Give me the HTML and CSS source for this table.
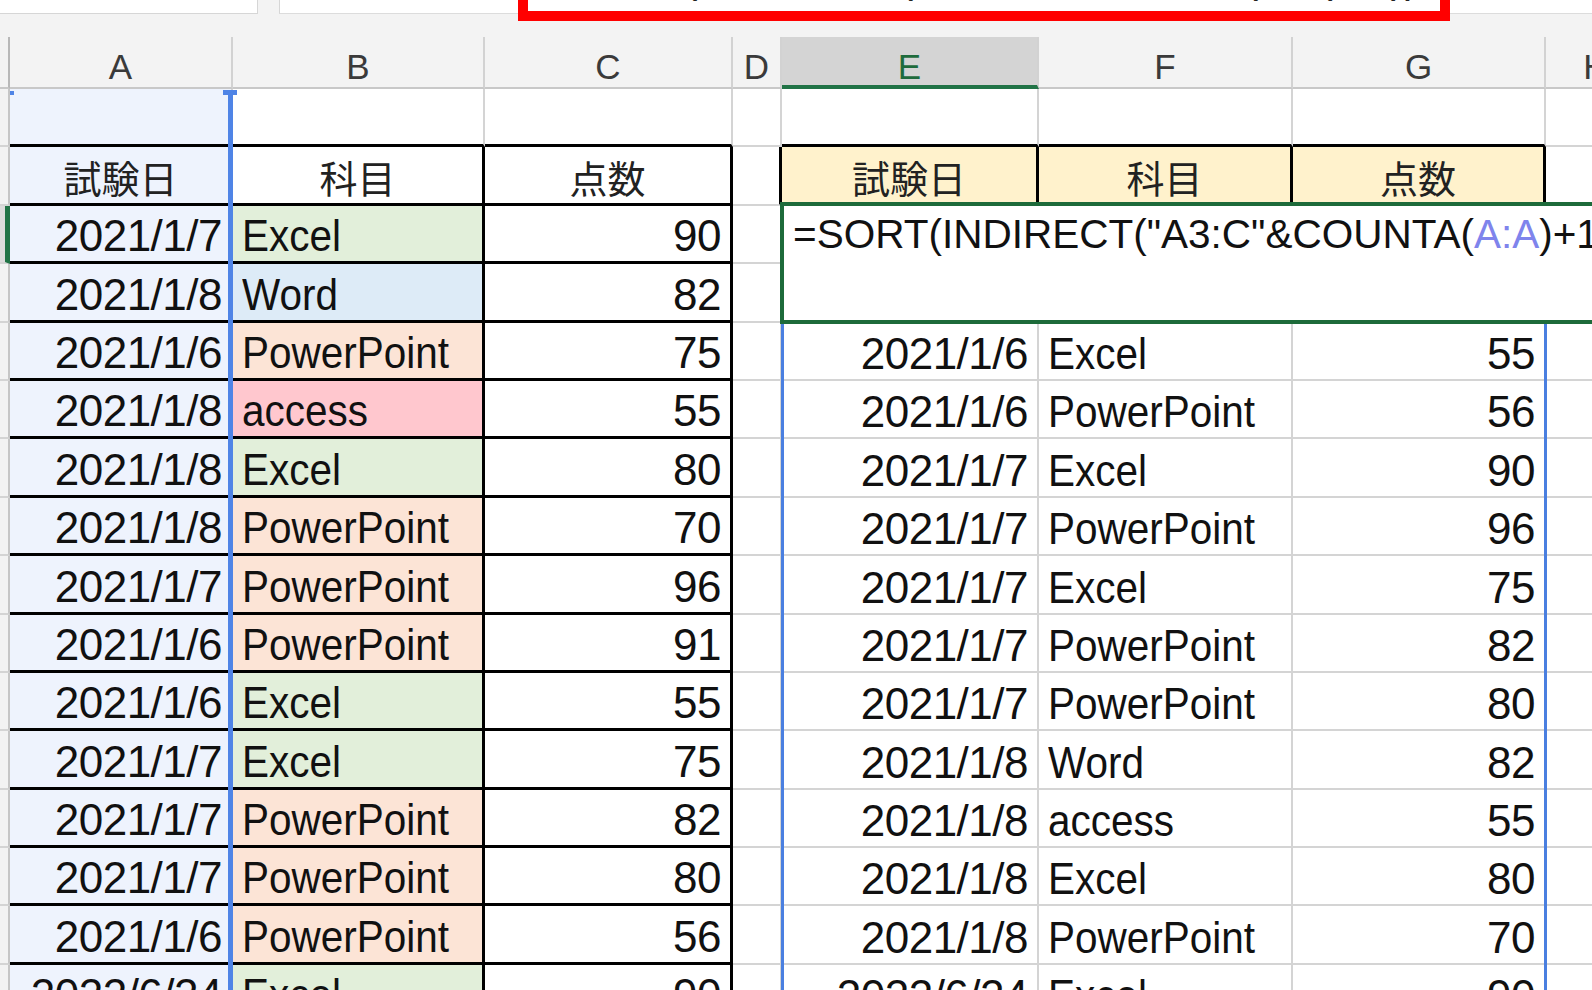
FILE: index.html
```html
<!DOCTYPE html>
<html lang="ja">
<head>
<meta charset="utf-8">
<title>SORT INDIRECT</title>
<link rel="stylesheet" href="styles.css">
</head>
<body>
<div class="app">
  <div class="topbar">
    <div class="namebox"></div>
    <div class="fbar"></div>
    <div class="fbar-text">=SORT(INDIRECT("A3:C"&amp;COUNTA(A:A)+1))</div>
    <div class="redbox"></div>
  </div>

  <div class="sheet">
    <div class="colhead">
      <div class="ch corner"></div>
      <div class="ch">A</div>
      <div class="ch">B</div>
      <div class="ch">C</div>
      <div class="ch">D</div>
      <div class="ch active">E</div>
      <div class="ch">F</div>
      <div class="ch">G</div>
      <div class="ch">H</div>
      <div class="ch rest"></div>
    </div>

    <div class="row">
      <div class="rh"></div>
      <div class="c sel bb"></div>
      <div class="c bb"></div>
      <div class="c bb"></div>
      <div class="c"></div>
      <div class="c bb"></div>
      <div class="c bb"></div>
      <div class="c bb"></div>
      <div class="c"></div>
      <div class="c"></div>
    </div>

    <div class="row">
      <div class="rh"></div>
      <div class="c sel bb hd">試験日</div>
      <div class="c bb br hd">科目</div>
      <div class="c bb br hd">点数</div>
      <div class="c br"></div>
      <div class="c bb br hd yl">試験日</div>
      <div class="c bb br hd yl">科目</div>
      <div class="c bb br hd yl">点数</div>
      <div class="c"></div>
      <div class="c"></div>
    </div>

    <div class="row">
      <div class="rh act"></div>
      <div class="c sel bb r">2021/1/7</div>
      <div class="c bb br xl"><span class="t">Excel</span></div>
      <div class="c bb br r">90</div>
      <div class="c"></div>
      <div class="c"></div>
      <div class="c"></div>
      <div class="c"></div>
      <div class="c"></div>
      <div class="c"></div>
    </div>

    <div class="row">
      <div class="rh"></div>
      <div class="c sel bb r">2021/1/8</div>
      <div class="c bb br wd"><span class="t">Word</span></div>
      <div class="c bb br r">82</div>
      <div class="c"></div>
      <div class="c"></div>
      <div class="c"></div>
      <div class="c"></div>
      <div class="c"></div>
      <div class="c"></div>
    </div>

    <div class="row">
      <div class="rh"></div>
      <div class="c sel bb r">2021/1/6</div>
      <div class="c bb br pp"><span class="t">PowerPoint</span></div>
      <div class="c bb br r">75</div>
      <div class="c"></div>
      <div class="c r">2021/1/6</div>
      <div class="c"><span class="t">Excel</span></div>
      <div class="c r">55</div>
      <div class="c"></div>
      <div class="c"></div>
    </div>

    <div class="row">
      <div class="rh"></div>
      <div class="c sel bb r">2021/1/8</div>
      <div class="c bb br ac"><span class="t">access</span></div>
      <div class="c bb br r">55</div>
      <div class="c"></div>
      <div class="c r">2021/1/6</div>
      <div class="c"><span class="t">PowerPoint</span></div>
      <div class="c r">56</div>
      <div class="c"></div>
      <div class="c"></div>
    </div>

    <div class="row">
      <div class="rh"></div>
      <div class="c sel bb r">2021/1/8</div>
      <div class="c bb br xl"><span class="t">Excel</span></div>
      <div class="c bb br r">80</div>
      <div class="c"></div>
      <div class="c r">2021/1/7</div>
      <div class="c"><span class="t">Excel</span></div>
      <div class="c r">90</div>
      <div class="c"></div>
      <div class="c"></div>
    </div>

    <div class="row">
      <div class="rh"></div>
      <div class="c sel bb r">2021/1/8</div>
      <div class="c bb br pp"><span class="t">PowerPoint</span></div>
      <div class="c bb br r">70</div>
      <div class="c"></div>
      <div class="c r">2021/1/7</div>
      <div class="c"><span class="t">PowerPoint</span></div>
      <div class="c r">96</div>
      <div class="c"></div>
      <div class="c"></div>
    </div>

    <div class="row">
      <div class="rh"></div>
      <div class="c sel bb r">2021/1/7</div>
      <div class="c bb br pp"><span class="t">PowerPoint</span></div>
      <div class="c bb br r">96</div>
      <div class="c"></div>
      <div class="c r">2021/1/7</div>
      <div class="c"><span class="t">Excel</span></div>
      <div class="c r">75</div>
      <div class="c"></div>
      <div class="c"></div>
    </div>

    <div class="row">
      <div class="rh"></div>
      <div class="c sel bb r">2021/1/6</div>
      <div class="c bb br pp"><span class="t">PowerPoint</span></div>
      <div class="c bb br r">91</div>
      <div class="c"></div>
      <div class="c r">2021/1/7</div>
      <div class="c"><span class="t">PowerPoint</span></div>
      <div class="c r">82</div>
      <div class="c"></div>
      <div class="c"></div>
    </div>

    <div class="row">
      <div class="rh"></div>
      <div class="c sel bb r">2021/1/6</div>
      <div class="c bb br xl"><span class="t">Excel</span></div>
      <div class="c bb br r">55</div>
      <div class="c"></div>
      <div class="c r">2021/1/7</div>
      <div class="c"><span class="t">PowerPoint</span></div>
      <div class="c r">80</div>
      <div class="c"></div>
      <div class="c"></div>
    </div>

    <div class="row">
      <div class="rh"></div>
      <div class="c sel bb r">2021/1/7</div>
      <div class="c bb br xl"><span class="t">Excel</span></div>
      <div class="c bb br r">75</div>
      <div class="c"></div>
      <div class="c r">2021/1/8</div>
      <div class="c"><span class="t">Word</span></div>
      <div class="c r">82</div>
      <div class="c"></div>
      <div class="c"></div>
    </div>

    <div class="row">
      <div class="rh"></div>
      <div class="c sel bb r">2021/1/7</div>
      <div class="c bb br pp"><span class="t">PowerPoint</span></div>
      <div class="c bb br r">82</div>
      <div class="c"></div>
      <div class="c r">2021/1/8</div>
      <div class="c"><span class="t">access</span></div>
      <div class="c r">55</div>
      <div class="c"></div>
      <div class="c"></div>
    </div>

    <div class="row">
      <div class="rh"></div>
      <div class="c sel bb r">2021/1/7</div>
      <div class="c bb br pp"><span class="t">PowerPoint</span></div>
      <div class="c bb br r">80</div>
      <div class="c"></div>
      <div class="c r">2021/1/8</div>
      <div class="c"><span class="t">Excel</span></div>
      <div class="c r">80</div>
      <div class="c"></div>
      <div class="c"></div>
    </div>

    <div class="row">
      <div class="rh"></div>
      <div class="c sel bb r">2021/1/6</div>
      <div class="c bb br pp"><span class="t">PowerPoint</span></div>
      <div class="c bb br r">56</div>
      <div class="c"></div>
      <div class="c r">2021/1/8</div>
      <div class="c"><span class="t">PowerPoint</span></div>
      <div class="c r">70</div>
      <div class="c"></div>
      <div class="c"></div>
    </div>

    <div class="row">
      <div class="rh"></div>
      <div class="c sel bb r">2022/6/24</div>
      <div class="c bb br xl"><span class="t">Excel</span></div>
      <div class="c bb br r">90</div>
      <div class="c"></div>
      <div class="c r">2022/6/24</div>
      <div class="c"><span class="t">Excel</span></div>
      <div class="c r">90</div>
      <div class="c"></div>
      <div class="c"></div>
    </div>

    <div class="sel-line"></div>
    <div class="handle h-left"></div>
    <div class="handle h-right"></div>
    <div class="spill"></div>
    <div class="editbox">=SORT(INDIRECT("A3:C"&amp;COUNTA(<span class="ref">A:A</span>)+1</div>
  </div>
</div>
</body>
</html>
```

FILE: styles.css
```css
html, body {
  margin: 0;
  padding: 0;
  background: #ffffff;
}

body {
  width: 1592px;
  height: 990px;
  overflow: hidden;
  font-family: "Liberation Sans", Arial, sans-serif;
  color: #000;
}

.app {
  width: 1592px;
  height: 990px;
  overflow: hidden;
  position: relative;
}

/* ---------- formula bar strip ---------- */
.topbar {
  position: relative;
  height: 37px;
  background: #f3f3f3;
  display: flex;
  align-items: flex-start;
  gap: 21px;
}

.namebox {
  width: 257px;
  height: 13px;
  background: #fff;
  border-right: 1px solid #d6d6d6;
  border-bottom: 1px solid #d6d6d6;
}

.fbar {
  flex: 1;
  height: 13px;
  background: #fff;
  border-left: 1px solid #d6d6d6;
  border-bottom: 1px solid #dcdcdc;
}

.fbar-text {
  position: absolute;
  left: 541px;
  top: -43px;
  font-family: "Liberation Sans", Arial, sans-serif;
  font-size: 42px;
  line-height: 42px;
  letter-spacing: 0.4px;
  white-space: nowrap;
  color: #222;
}

.redbox {
  position: absolute;
  left: 518px;
  top: -12px;
  width: 932px;
  height: 33px;
  box-sizing: border-box;
  border: 10px solid #ff0000;
}

/* ---------- sheet ---------- */
.sheet {
  position: relative;
  --cols: 10px 223px 252px 248px 49px 257px 254px 253px 102px 1fr;
}

.colhead {
  display: grid;
  grid-template-columns: var(--cols);
  height: 52px;
  background: #f3f3f3;
}

.ch {
  box-sizing: border-box;
  border-right: 2px solid #d2d2d2;
  border-bottom: 2px solid #c8c8c8;
  display: flex;
  align-items: flex-end;
  justify-content: center;
  padding-bottom: 3px;
  font-family: "Liberation Sans", Arial, sans-serif;
  font-size: 35px;
  line-height: 1;
  color: #3a3a3a;
  overflow: hidden;
}

.ch.corner {
  border-right-color: #b8b8b8;
}

.ch.rest {
  border-right: none;
}

.ch.active {
  background: #d4d4d4;
  border-bottom: 4px solid #217346;
  color: #1e6b3c;
  padding-bottom: 1px;
}

.row {
  display: grid;
  grid-template-columns: var(--cols);
  height: 58.4px;
}

.rh {
  box-sizing: border-box;
  background: #f3f3f3;
  border-right: 2px solid #c6c6c6;
  border-bottom: 2px solid #d4d4d4;
}

.rh.act {
  background: #dcdcdc;
  border-right: 5px solid #217346;
}

.c {
  box-sizing: border-box;
  border-right: 2px solid #d4d4d4;
  border-bottom: 2px solid #d4d4d4;
  display: flex;
  align-items: flex-end;
  padding: 0 9px 3px 9px;
  font-size: 44px;
  line-height: 1;
  white-space: nowrap;
  overflow: hidden;
  min-width: 0;
  color: #111;
}

.c .t {
  display: inline-block;
  transform: scaleX(0.92);
  transform-origin: left bottom;
}

.c.r {
  justify-content: flex-end;
  letter-spacing: -0.5px;
}

.c.hd {
  justify-content: center;
  font-family: "Noto Sans CJK JP", sans-serif;
  font-size: 38px;
  padding-bottom: 7px;
  color: #222;
}

.c.bb {
  border-bottom: 3px solid #000;
}

.c.br {
  border-right: 3px solid #000;
}

.c.sel {
  background: #eef3fd;
}

.c.xl { background: #e2efda; }
.c.wd { background: #ddebf7; }
.c.pp { background: #fce4d6; }
.c.ac { background: #ffc7ce; }
.c.yl { background: #fff2cc; }

/* ---------- overlays ---------- */
.sel-line {
  position: absolute;
  left: 228px;
  top: 56px;
  width: 5px;
  height: 1000px;
  background: #4f84e6;
}

.handle {
  position: absolute;
  background: #4f84e6;
}

.h-left {
  left: 10px;
  top: 54px;
  width: 4px;
  height: 4px;
}

.h-right {
  left: 223px;
  top: 53px;
  width: 14px;
  height: 5px;
}

.spill {
  position: absolute;
  left: 781px;
  top: 285px;
  width: 766px;
  height: 800px;
  box-sizing: border-box;
  border-left: 3px solid #4a7fe0;
  border-right: 3px solid #4a7fe0;
}

.editbox {
  position: absolute;
  left: 780px;
  top: 165px;
  width: 1000px;
  height: 122px;
  box-sizing: border-box;
  border: 4px solid #1d6b3a;
  background: #fff;
  padding: 8px 0 0 9px;
  font-family: "Liberation Sans", Arial, sans-serif;
  font-size: 40.5px;
  line-height: 40px;
  white-space: nowrap;
  color: #111;
}

.editbox .ref {
  color: #7f84ec;
}
```
